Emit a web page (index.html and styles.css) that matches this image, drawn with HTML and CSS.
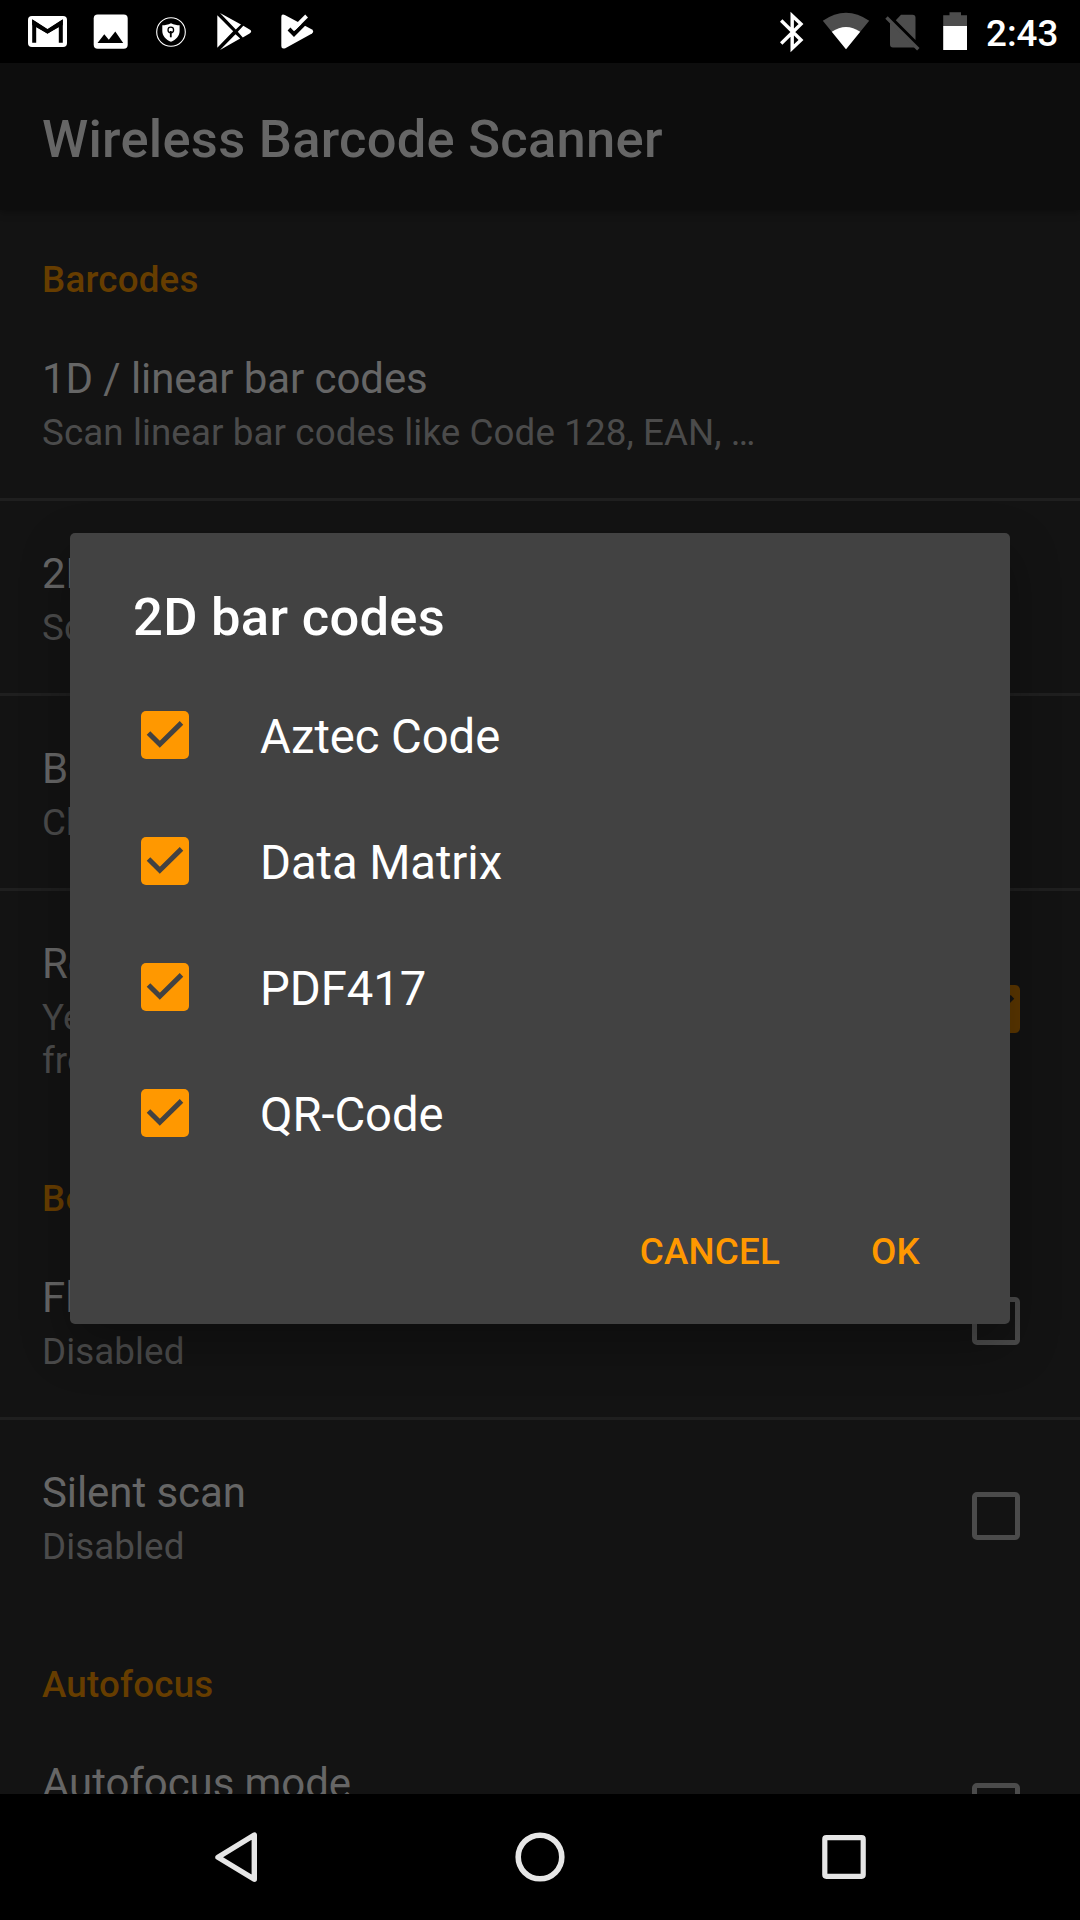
FILE: index.html
```html
<!DOCTYPE html>
<html lang="en">
<head>
<meta charset="utf-8">
<title>Wireless Barcode Scanner</title>
<link rel="stylesheet" href="styles.css">
</head>
<body>
<div class="screen">
  <header class="status">
    <div class="status-group">
      <svg width="64" height="63" viewBox="16 0 64 63"><rect x="28" y="16" width="39" height="31" rx="4" fill="#fff"/><path d="M34.2 42.8V23L47.5 31.5L60.8 23V42.8" fill="none" stroke="#000" stroke-width="4"/><path d="M32.2 19.5L47.5 29.5L62.8 19.5V25L47.5 33.5L32.2 25Z" fill="#000"/></svg>
      <svg width="62" height="63" viewBox="80 0 62 63"><rect x="93.7" y="14.5" width="34" height="34.3" rx="4" fill="#fff"/><path d="M97.5 43L104.3 34.3L108.8 39.8L115.3 31.5L123.2 43Z" fill="#000"/></svg>
      <svg width="60" height="63" viewBox="142 0 60 63"><circle cx="171" cy="32" r="14.3" fill="none" stroke="#fff" stroke-width="1.1"/><path d="M171 23.2C168 24.8 165 25.2 162.3 25.2V31C162.3 36 166 39.8 171 41.7C176 39.8 179.6 36 179.6 31V25.2C177 25.2 174 24.8 171 23.2Z" fill="#fff"/><circle cx="170.8" cy="30" r="2.8" fill="#fff" stroke="#000" stroke-width="1.3"/><path d="M170.8 31V37.3" stroke="#000" stroke-width="1.8"/></svg>
      <svg width="64" height="63" viewBox="202 0 64 63"><path d="M217.3 15.3L233.2 31.3L217.3 47.8ZM220 13L241 24.6L235.8 29.6ZM220 50L235.5 34.2L240.2 38.6ZM243.3 25.8L250 29.8Q252.4 31.4 250 33.2L242.8 37.6L237.8 31.8Z" fill="#fff"/></svg>
      <svg width="60" height="63" viewBox="266 0 60 63"><path d="M281.3 17Q281.3 13.5 284.8 15L312 29.5Q314.4 31.5 312 33.5L285.3 48.3Q281.3 49.5 281.3 46Z" fill="#fff"/><path d="M289 29L294 34.1L309.4 18.7" fill="none" stroke="#000" stroke-width="4"/><path d="M294 28.6L306.6 16" fill="none" stroke="#fff" stroke-width="3.9"/></svg>
    </div>
    <div class="status-group">
      <svg width="46" height="63" viewBox="769 0 46 63"><path d="M781.2 20.5L801 40L792.2 48.3V15.7L801 24L781.2 43.5" fill="none" stroke="#fff" stroke-width="3.4"/></svg>
      <svg width="62" height="63" viewBox="815 0 62 63"><path d="M846 49.3L822.8 20.8Q846 4.8 869.2 20.8Z" fill="#4d4d4d"/><path d="M846 49.3L831.8 31.8Q846 22.4 860.2 31.8Z" fill="#fff"/></svg>
      <svg width="54" height="63" viewBox="877 0 54 63"><path d="M901 14.7H912.5Q915.5 14.7 915.5 17.7V40L895.8 20.2ZM890 22.5L915 47.5H893Q890 47.5 890 44.5Z" fill="#4d4d4d"/><path d="M886.5 17.5L918.3 49.3" stroke="#4d4d4d" stroke-width="3.4"/></svg>
      <svg width="55" height="63" viewBox="931 0 55 63"><path d="M943.2 26.5V15.3H949.5V12.3H961V15.3H967V26.5Z" fill="#4d4d4d"/><path d="M943.2 26H967V50H943.2Z" fill="#fff"/></svg>
      <span class="clock">2:43</span>
    </div>
  </header>

  <div class="app-bar">Wireless Barcode Scanner</div>

  <main class="settings">
    <h2 class="category category-first">Barcodes</h2>
    <div class="item"><div class="item-text"><div class="item-title">1D / linear bar codes</div><div class="item-summary">Scan linear bar codes like Code 128, EAN, …</div></div></div>
    <div class="item divided"><div class="item-text"><div class="item-title">2D</div><div class="item-summary">Sc</div></div></div>
    <div class="item divided"><div class="item-text"><div class="item-title">B</div><div class="item-summary">Ch</div></div></div>
    <div class="item divided"><div class="item-text"><div class="item-title">Re</div><div class="item-summary">Ye<br>fro</div></div>
      <svg class="box" viewBox="0 0 48 48"><rect width="48" height="48" rx="5" fill="#5c3700"/><path d="M7.5 22L18.8 33.3L40.5 11.9" fill="none" stroke="#131313" stroke-width="5"/></svg></div>
    <h2 class="category">Be</h2>
    <div class="item"><div class="item-text"><div class="item-title">Fl</div><div class="item-summary">Disabled</div></div><span class="box box-empty"></span></div>
    <div class="item divided"><div class="item-text"><div class="item-title">Silent scan</div><div class="item-summary">Disabled</div></div><span class="box box-empty"></span></div>
    <h2 class="category">Autofocus</h2>
    <div class="item item-last"><div class="item-text"><div class="item-title">Autofocus mode</div></div><span class="box box-empty"></span></div>
  </main>

  <nav class="nav">
    <svg width="248" height="126" viewBox="112 1794 248 126"><path d="M254.3 1835V1879.3L218 1857.2Z" fill="none" stroke="#e6e6e6" stroke-width="5.4" stroke-linejoin="round"/></svg>
    <svg width="248" height="126" viewBox="416 1794 248 126"><circle cx="540" cy="1857" r="21.8" fill="none" stroke="#e6e6e6" stroke-width="5.6"/></svg>
    <svg width="248" height="126" viewBox="720 1794 248 126"><rect x="824.8" y="1837.7" width="38.4" height="38.6" rx="1.5" fill="none" stroke="#e6e6e6" stroke-width="5.2"/></svg>
  </nav>

  <section class="dialog">
    <h1 class="dialog-title">2D bar codes</h1>
    <div class="choices">
      <label class="choice"><svg class="box" viewBox="0 0 48 48"><rect width="48" height="48" rx="5" fill="#ff9800"/><path d="M7.5 22L18.8 33.3L40.5 11.9" fill="none" stroke="#424242" stroke-width="5"/></svg><span>Aztec Code</span></label>
      <label class="choice"><svg class="box" viewBox="0 0 48 48"><rect width="48" height="48" rx="5" fill="#ff9800"/><path d="M7.5 22L18.8 33.3L40.5 11.9" fill="none" stroke="#424242" stroke-width="5"/></svg><span>Data Matrix</span></label>
      <label class="choice"><svg class="box" viewBox="0 0 48 48"><rect width="48" height="48" rx="5" fill="#ff9800"/><path d="M7.5 22L18.8 33.3L40.5 11.9" fill="none" stroke="#424242" stroke-width="5"/></svg><span>PDF417</span></label>
      <label class="choice"><svg class="box" viewBox="0 0 48 48"><rect width="48" height="48" rx="5" fill="#ff9800"/><path d="M7.5 22L18.8 33.3L40.5 11.9" fill="none" stroke="#424242" stroke-width="5"/></svg><span>QR-Code</span></label>
    </div>
    <div class="actions"><button class="action">CANCEL</button><button class="action">OK</button></div>
  </section>
</div>
</body>
</html>
```
FILE: styles.css
```css
* { box-sizing: border-box; }
body { margin: 0; background: #000; font-family: Roboto, sans-serif; }
svg { display: block; flex: none; }
h1, h2 { margin: 0; }

.screen {
  position: relative;
  display: flex;
  flex-direction: column;
  width: 1080px;
  height: 1920px;
  overflow: hidden;
  background: #131313;
}

.status {
  display: flex;
  justify-content: space-between;
  flex: none;
  height: 63px;
  padding: 0 21px 0 16px;
  background: #000;
}
.status-group { display: flex; }
.clock {
  width: 73px;
  padding-top: 1px;
  font-size: 36.75px;
  font-weight: 500;
  line-height: 66px;
  color: #fff;
  white-space: nowrap;
}

.app-bar {
  flex: none;
  height: 147px;
  padding-left: 42px;
  font-size: 52.5px;
  font-weight: 500;
  line-height: 152px;
  letter-spacing: .26px;
  color: #666;
  background: #0d0d0d;
  box-shadow: 0 2px 8px rgba(0, 0, 0, .35);
}

.settings { flex: 1; min-height: 0; overflow: hidden; }
.category {
  padding: 51px 42px 5px;
  font-size: 36.75px;
  font-weight: 500;
  line-height: 43px;
  letter-spacing: .2px;
  color: #663d00;
}
.category-first { padding-top: 48px; }
.item {
  display: flex;
  align-items: center;
  justify-content: space-between;
  padding: 0 60px 0 42px;
}
.item-last { height: 192px; align-items: flex-start; }
.item-last .box { margin-top: 72px; }
.divided { border-top: 3px solid #1f1f1f; }
.item-text { padding: 48px 0 44px; }
.item-title { font-size: 42px; line-height: 50px; letter-spacing: -.08px; color: #666; }
.item-summary { margin-top: 7px; font-size: 36.75px; line-height: 43px; letter-spacing: .09px; color: #4b4b4b; }

.box { width: 48px; height: 48px; flex: none; }
.box-empty { border: 5px solid #4b4b4b; border-radius: 5px; }

.nav {
  display: flex;
  justify-content: center;
  gap: 56px;
  flex: none;
  height: 126px;
  background: #000;
}

/* Modal over the settings list */
.dialog {
  position: absolute;
  left: 70px;
  top: 533px;
  width: 940px;
  height: 791px;
  padding-top: 53px;
  border-radius: 5px;
  background: #424242;
  box-shadow: 0 20px 50px rgba(0, 0, 0, .3);
}
.dialog-title {
  padding-left: 63px;
  font-size: 52.5px;
  font-weight: 500;
  line-height: 62px;
  letter-spacing: .3px;
  color: #fff;
}
.choices { padding-top: 24px; }
.choice {
  display: flex;
  align-items: center;
  gap: 71px;
  height: 126px;
  padding-left: 71px;
  font-size: 47.25px;
  line-height: 56px;
  letter-spacing: -.08px;
  color: #fff;
}
.choice span { padding-top: 4px; }
.actions {
  display: flex;
  justify-content: flex-end;
  align-items: center;
  height: 147px;
  padding: 3px 69px 0 0;
  gap: 49px;
}
.action {
  padding: 0 21px;
  border: 0;
  background: none;
  font: 500 36.75px/43px Roboto, sans-serif;
  letter-spacing: .2px;
  color: #ff9800;
}
```
